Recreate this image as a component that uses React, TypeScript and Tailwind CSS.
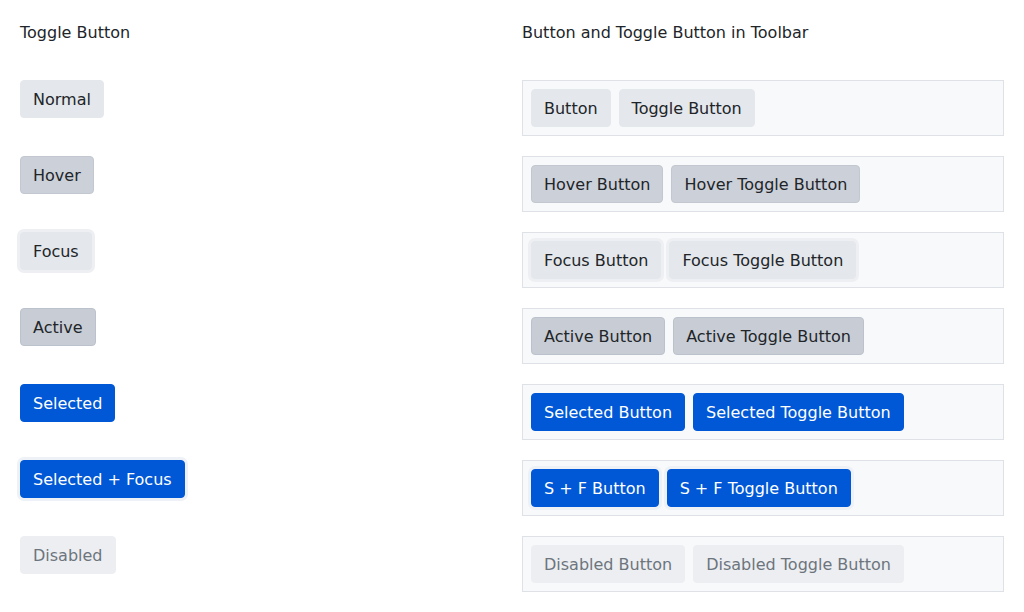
type Variant = "normal" | "hover" | "focus" | "active" | "selected" | "selfocus" | "disabled";

const base =
  "inline-flex items-center rounded-[4px] border px-3 pt-[7px] pb-[5px] text-[16px] leading-6 whitespace-nowrap";

const styles: Record<Variant, string> = {
  normal: "bg-[#e4e7eb] border-[#e4e7eb] text-[#212529]",
  hover: "bg-[#ccd0d8] border-[#c3c8d0] text-[#212529]",
  focus: "bg-[#e4e7eb] border-[#e4e7eb] text-[#212529] shadow-[0_0_0_3px_#edeff2]",
  active: "bg-[#c8cdd5] border-[#bcc2cb] text-[#212529]",
  selected: "bg-[#0058d6] border-[#0058d6] text-white",
  selfocus: "bg-[#0058d6] border-[#0058d6] text-white shadow-[0_0_0_3px_#eef1f6]",
  disabled: "bg-[#eceef1] border-[#eceef1] text-[#6c757d]",
};

function Btn({ v, children }: { v: Variant; children: React.ReactNode }) {
  return <span className={`${base} ${styles[v]}`}>{children}</span>;
}

const rows: { v: Variant; label: string; a: string; b: string }[] = [
  { v: "normal", label: "Normal", a: "Button", b: "Toggle Button" },
  { v: "hover", label: "Hover", a: "Hover Button", b: "Hover Toggle Button" },
  { v: "focus", label: "Focus", a: "Focus Button", b: "Focus Toggle Button" },
  { v: "active", label: "Active", a: "Active Button", b: "Active Toggle Button" },
  { v: "selected", label: "Selected", a: "Selected Button", b: "Selected Toggle Button" },
  { v: "selfocus", label: "Selected + Focus", a: "S + F Button", b: "S + F Toggle Button" },
  { v: "disabled", label: "Disabled", a: "Disabled Button", b: "Disabled Toggle Button" },
];

export default function App() {
  return (
    <main
      className="min-h-screen bg-white p-5 text-[#212529]"
      style={{ fontFamily: '"DejaVu Sans", sans-serif' }}
    >
      <div className="grid grid-cols-2 gap-x-5">
        <div>
          <h2 className="text-[16px] leading-6 font-normal pt-px mb-[35px]">Toggle Button</h2>
          <div className="flex flex-col gap-5">
            {rows.map((r) => (
              <div key={r.label} className="h-14 flex items-start">
                <Btn v={r.v}>{r.label}</Btn>
              </div>
            ))}
          </div>
        </div>
        <div>
          <h2 className="text-[16px] leading-6 font-normal pt-px mb-[35px]">Button and Toggle Button in Toolbar</h2>
          <div className="flex flex-col gap-5">
            {rows.map((r) => (
              <div
                key={r.label}
                className="h-14 flex items-center gap-2 border border-[#dee2e6] bg-[#f8f9fa] p-2"
              >
                <Btn v={r.v}>{r.a}</Btn>
                <Btn v={r.v}>{r.b}</Btn>
              </div>
            ))}
          </div>
        </div>
      </div>
    </main>
  );
}
